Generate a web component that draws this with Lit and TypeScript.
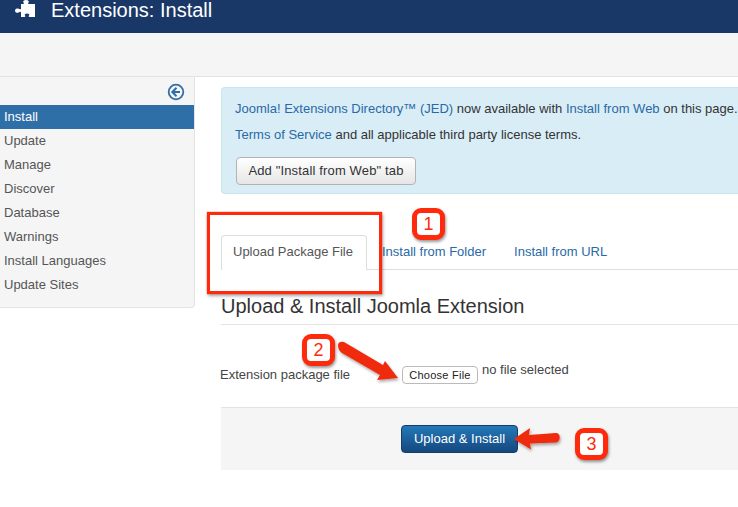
import { LitElement, html, css } from 'lit';
import { customElement } from 'lit/decorators.js';

const menu = ['Install', 'Update', 'Manage', 'Discover', 'Database', 'Warnings', 'Install Languages', 'Update Sites'];

@customElement('app-root')
export class AppRoot extends LitElement {
  static styles = css`
    :host {
      display: block;
      position: relative;
      width: 738px;
      height: 507px;
      overflow: hidden;
      background: #fff;
      font-family: 'Liberation Sans', Arial, sans-serif;
      font-size: 13px;
      color: #555;
    }
    a { color: #2a69a5; text-decoration: none; }

    .header {
      height: 33px;
      background: #1a3867;
      color: #fff;
      display: flex;
      align-items: flex-start;
      gap: 15px;
      padding-left: 15px;
      box-sizing: border-box;
      font-size: 20px;
      line-height: 20px;
    }
    .header svg { width: 21px; height: 18px; flex: none; }
    .subhead {
      height: 44px;
      box-sizing: border-box;
      background: #f5f5f5;
      border-bottom: 1px solid #e3e3e3;
    }
    .body { display: flex; align-items: flex-start; }

    .sidebar {
      width: 195px;
      height: 231px;
      box-sizing: border-box;
      flex: none;
      background: #f5f5f5;
      border-right: 1px solid #e3e3e3;
      border-bottom: 1px solid #e3e3e3;
      border-bottom-right-radius: 4px;
      padding-top: 6px;
    }
    .toggle { display: flex; justify-content: flex-end; padding-right: 9px; height: 22px; }
    .toggle svg { width: 18px; height: 18px; }
    .item { height: 24px; line-height: 24px; padding-left: 4px; color: #555; }
    .item.active { background: #2f6fa8; color: #fff; }

    .main { flex: 1; min-width: 0; padding: 10px 0 0 26px; }

    .alert {
      height: 107px;
      box-sizing: border-box;
      width: 560px;
      background: #d9edf7;
      border: 1px solid #c9e6ee;
      border-right: none;
      border-radius: 4px 0 0 4px;
      padding: 13px 13px;
      color: #333;
      white-space: nowrap;
    }
    .alert p { margin: 0 0 11px; line-height: 15px; }
    .alert p + p { margin-bottom: 15px; }
    .btn {
      display: inline-block;
      box-sizing: border-box;
      height: 28px;
      width: 180px;
      margin-left: 1px;
      line-height: 26px;
      text-align: center;
      letter-spacing: 0.15px;
      border: 1px solid #b3b3b3;
      border-radius: 4px;
      background: linear-gradient(#fff, #e6e6e6);
      color: #333;
    }

    .tabs {
      display: flex;
      margin-top: 41px;
      height: 35px;
      box-sizing: border-box;
      border-bottom: 1px solid #ddd;
    }
    .tab { height: 34px; line-height: 33px; box-sizing: border-box; padding: 0 14px; }
    .tab.active {
      width: 146px;
      height: 35px;
      padding: 0 11px;
      margin-right: 1px;
      background: #fff;
      border: 1px solid #ddd;
      border-bottom: none;
      border-radius: 4px 4px 0 0;
      line-height: 31px;
      color: #555;
    }
    h2 {
      margin: 26px 0 0;
      height: 28px;
      line-height: 20px;
      font-size: 20px;
      font-weight: normal;
      color: #333;
      border-bottom: 1px solid #e3e3e3;
      box-sizing: content-box;
    }
    .field { display: flex; height: 82px; margin-left: -1px; box-sizing: border-box; padding-top: 37px; }
    .field label { width: 182px; padding-top: 5px; line-height: 15px; color: #444; }
    .choose {
      height: 18px;
      width: 76px;
      box-sizing: border-box;
      margin-top: 4px;
      border: 1px solid #bbb;
      border-radius: 4px;
      background: #fff;
      color: #222;
      font-size: 11px;
      line-height: 17px;
      text-align: center;
      letter-spacing: 0.25px;
    }
    .nofile { margin-left: 4px; line-height: 15px; color: #444; }

    .actions {
      height: 63px;
      box-sizing: border-box;
      background: #f5f5f5;
      border-top: 1px solid #e3e3e3;
      padding: 17px 0 0 180px;
    }
    .primary {
      display: block;
      width: 117px;
      height: 28px;
      box-sizing: border-box;
      line-height: 26px;
      text-align: center;
      color: #fff;
      border: 1px solid #123d68;
      border-radius: 4px;
      background: linear-gradient(#2478b8, #14487f);
    }

    .overlay { position: absolute; left: 0; top: 0; width: 738px; height: 507px; pointer-events: none; }
    .frame {
      position: absolute;
      left: 207px; top: 212px;
      width: 175px; height: 82px;
      box-sizing: border-box;
      border: 3px solid #ff2a0c;
      box-shadow: 0 0 1px #ff2a0c, 1px 2px 3px rgba(0,0,0,.35);
    }
    .badge {
      position: absolute;
      width: 33px; height: 32px;
      box-sizing: border-box;
      background: #fff;
      border: 5px solid #ff2a0c;
      border-radius: 9px;
      box-shadow: 1px 2px 3px rgba(0,0,0,.4);
      color: #ff2a0c;
      font-size: 18px;
      line-height: 22px;
      text-align: center;
    }
    .badge.one { left: 412px; top: 208px; }
    .badge.two { left: 302px; top: 334px; }
    .badge.three { left: 575px; top: 428px; }
  `;

  render() {
    return html`
      <div class="header">
        <svg viewBox="0 0 21 18"><path fill="#fff" d="M6 4H8.500C9 4 9 3 8.500 2.500 7.500 1.500 8.500 0 11 0s3.500 1.500 2.500 2.500C13 3 13 4 13.500 4H20V17H14.500C13.500 17 13.500 16 14 15.500 15 14.500 14 13.500 12 13.500S9 14.500 10 15.500C10.500 16 10.500 17 9.500 17H6V12.500C6 11.500 5 11.500 4.500 12 3.500 13 0 13.500 0 10.500 0 8 3.500 8 4.500 9 5 9.500 6 9.500 6 8.500z"/></svg>
        <span>Extensions: Install</span>
      </div>
      <div class="subhead"></div>
      <div class="body">
        <div class="sidebar">
          <div class="toggle">
            <svg viewBox="0 0 18 18"><circle cx="9" cy="9" r="7.300" fill="none" stroke="#2f6fa8" stroke-width="1.800"/><path d="M9.500 4.800 5.300 9l4.200 4.200M5.500 9h7.500" fill="none" stroke="#2f6fa8" stroke-width="2"/></svg>
          </div>
          ${menu.map((m, i) => html`<div class="item ${i === 0 ? 'active' : ''}">${m}</div>`)}
        </div>
        <div class="main">
          <div class="alert">
            <p><a href="#">Joomla! Extensions Directory™ (JED)</a> now available with <a href="#">Install from Web</a> on this page.</p>
            <p><a href="#">Terms of Service</a> and all applicable third party license terms.</p>
            <span class="btn">Add "Install from Web" tab</span>
          </div>
          <div class="tabs">
            <div class="tab active">Upload Package File</div>
            <a class="tab" href="#">Install from Folder</a>
            <a class="tab" href="#">Install from URL</a>
          </div>
          <h2>Upload &amp; Install Joomla Extension</h2>
          <div class="field">
            <label>Extension package file</label>
            <div class="choose">Choose File</div>
            <span class="nofile">no file selected</span>
          </div>
          <div class="actions"><span class="primary">Upload &amp; Install</span></div>
        </div>
      </div>

      <div class="frame"></div>
      <div class="badge one">1</div>
      <div class="badge two">2</div>
      <div class="badge three">3</div>
      <svg class="overlay" viewBox="0 0 738 507">
        <defs>
          <filter id="s" x="-20%" y="-20%" width="140%" height="140%"><feDropShadow dx="1" dy="2" stdDeviation="1.500" flood-color="#000" flood-opacity=".35"/></filter>
        </defs>
        <path filter="url(#s)" fill="#f0290c" d="M338 345c0-3 3-4 6-3l39 23 2-4 13 17-21 2 3-5-38-22c-3-2-4-5-4-8z"/>
        <path filter="url(#s)" fill="#f0290c" d="M514 439l16-11-1 7 27-2c5-.5 5 9 0 9.500l-26 1 1 6z"/>
      </svg>
    `;
  }
}
